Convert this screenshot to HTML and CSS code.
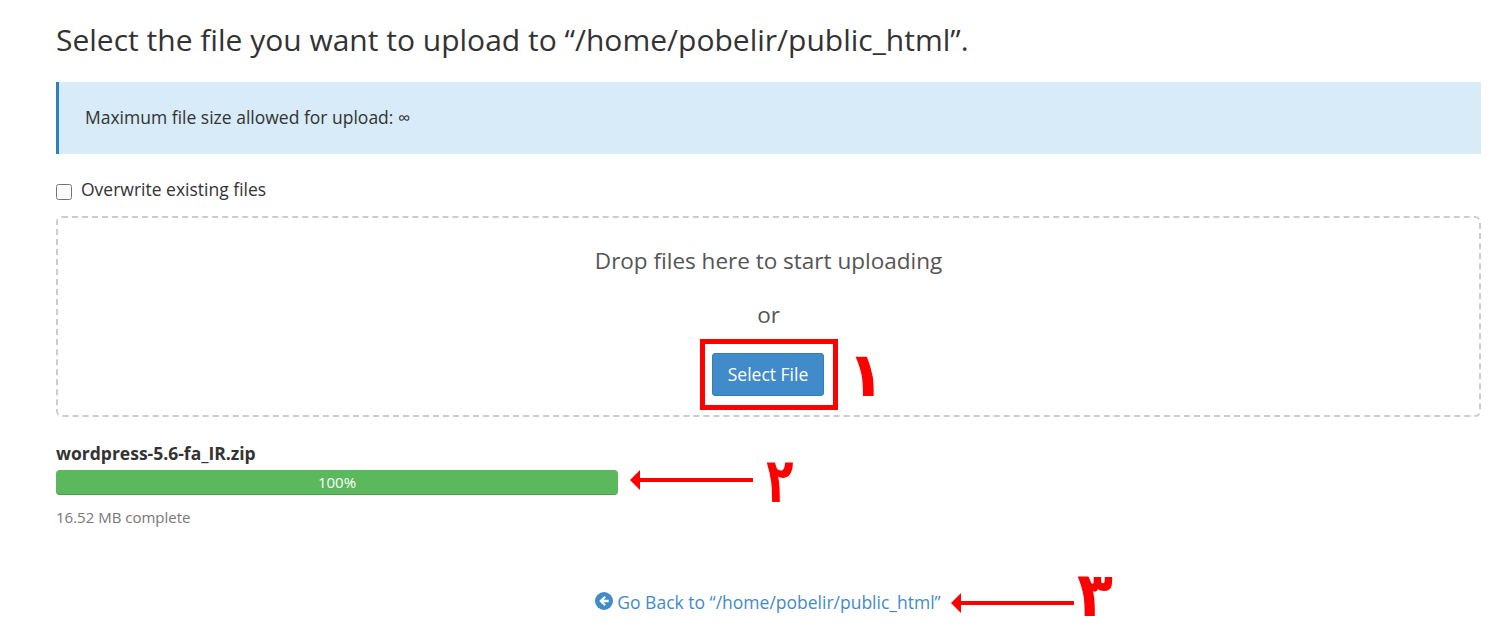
FILE: index.html
```html
<!DOCTYPE html>
<html lang="en">
<head>
<meta charset="utf-8">
<title>Upload</title>
<link rel="stylesheet" href="styles.css">
</head>
<body>
<main class="page">
  <h1 class="title">Select the file you want to upload to “/home/pobelir/public_html”.</h1>
  <div class="alert">Maximum file size allowed for upload: ∞</div>
  <label class="overwrite"><input type="checkbox" class="check"><span>Overwrite existing files</span></label>
  <section class="dropzone">
    <p class="drop-text">Drop files here to start uploading</p>
    <p class="drop-or">or</p>
    <button class="select-btn" type="button">Select File</button>
  </section>
  <section class="upload">
    <div class="file-name">wordpress-5.6-fa_IR.zip</div>
    <div class="progress">100%</div>
    <div class="file-status">16.52 MB complete</div>
  </section>
  <a class="back" href="#">
    <svg class="back-icon" viewBox="0 0 18 18" aria-hidden="true"><circle cx="9" cy="9" r="9" fill="#428bca"/><path d="M9.4 3.9 4.2 9l5.2 5.1 1.5-1.5-2.3-2.3h5.1V7.7H8.6l2.3-2.3z" fill="#fff"/></svg>
    Go Back to “/home/pobelir/public_html”
  </a>

  <div class="mark-box"></div>
  <span class="digit digit-1">۱</span>
  <svg class="arrow arrow-2" viewBox="0 0 123 20" aria-hidden="true"><path d="M0 10 10 0v8h113v4H10v8z" fill="#f00"/></svg>
  <span class="digit digit-2">۲</span>
  <svg class="arrow arrow-3" viewBox="0 0 123 20" aria-hidden="true"><path d="M0 10 10 0v8h113v4H10v8z" fill="#f00"/></svg>
  <span class="digit digit-3">۳</span>
</main>
</body>
</html>
```
FILE: styles.css
```css
* { box-sizing: border-box; }
html, body { margin: 0; background: #fff; }
body { font-family: "Open Sans", sans-serif; color: #333; }
.page {
  position: relative;
  width: 1506px;
  height: 640px;
  padding: 20px 25px 0 56px;
  overflow: hidden;
}
.title {
  margin: 0;
  font-size: 30px;
  line-height: 40px;
  font-weight: 400;
}
.alert {
  margin-top: 22px;
  height: 72px;
  padding: 0 0 2px 26px;
  display: flex;
  align-items: center;
  border-left: 3px solid #2a80c0;
  background: #d7ebf8;
  font-size: 17.5px;
}
.overwrite {
  display: flex;
  align-items: center;
  gap: 9px;
  height: 24px;
  margin-top: 23px;
  font-size: 17.5px;
}
.check {
  width: 16px;
  height: 16px;
  margin: 6px 0 0;
}
.dropzone {
  margin-top: 15px;
  height: 201px;
  border: 2px dashed #ccc;
  border-radius: 6px;
  display: flex;
  flex-direction: column;
  align-items: center;
  color: #555;
}
.drop-text {
  margin: 25px 0 0;
  font-size: 22.5px;
  line-height: 36px;
}
.drop-or {
  margin: 18px 0 0;
  font-size: 22.5px;
  line-height: 36px;
}
.select-btn {
  width: 112px;
  height: 43px;
  margin: 20px 1px 0 0;
  padding: 0 0 2px;
  border: 1px solid #357ebd;
  border-radius: 3px;
  background: #428bca;
  color: #fff;
  font: 400 17.5px "Open Sans", sans-serif;
}
.upload { margin-top: 24px; }
.file-name {
  font-size: 17.5px;
  line-height: 24px;
  font-weight: 700;
  color: #333;
}
.progress {
  width: 562px;
  height: 25px;
  margin-top: 5px;
  border-radius: 4px;
  background: #5cb85c;
  box-shadow: inset 0 -1px 0 rgba(0, 0, 0, .15);
  color: #fff;
  font-size: 15px;
  line-height: 25px;
  text-align: center;
}
.file-status {
  margin-top: 12px;
  font-size: 15px;
  line-height: 20px;
  color: #777;
}
.back {
  display: flex;
  align-items: center;
  justify-content: center;
  gap: 4px;
  width: 1424px;
  margin-top: 63px;
  font-size: 17.5px;
  line-height: 24px;
  color: #428bca;
  text-decoration: none;
}
.back-icon { width: 18px; height: 18px; margin-top: -3px; }

.mark-box {
  position: absolute;
  left: 700px;
  top: 339px;
  width: 138px;
  height: 71px;
  border: 5px solid #f00;
}
.arrow { position: absolute; width: 123px; height: 20px; }
.arrow-2 { left: 630px; top: 470px; }
.arrow-3 { left: 951px; top: 593px; }
.digit {
  position: absolute;
  font-family: "DejaVu Sans", sans-serif;
  font-weight: 700;
  font-size: 62px;
  line-height: 70px;
  color: #f00;
}
.digit-1 { left: 847px; top: 340px; }
.digit-2 { left: 761px; top: 446px; transform: scaleX(.72); }
.digit-3 { left: 1076px; top: 560px; transform: scaleX(.95); }
```
